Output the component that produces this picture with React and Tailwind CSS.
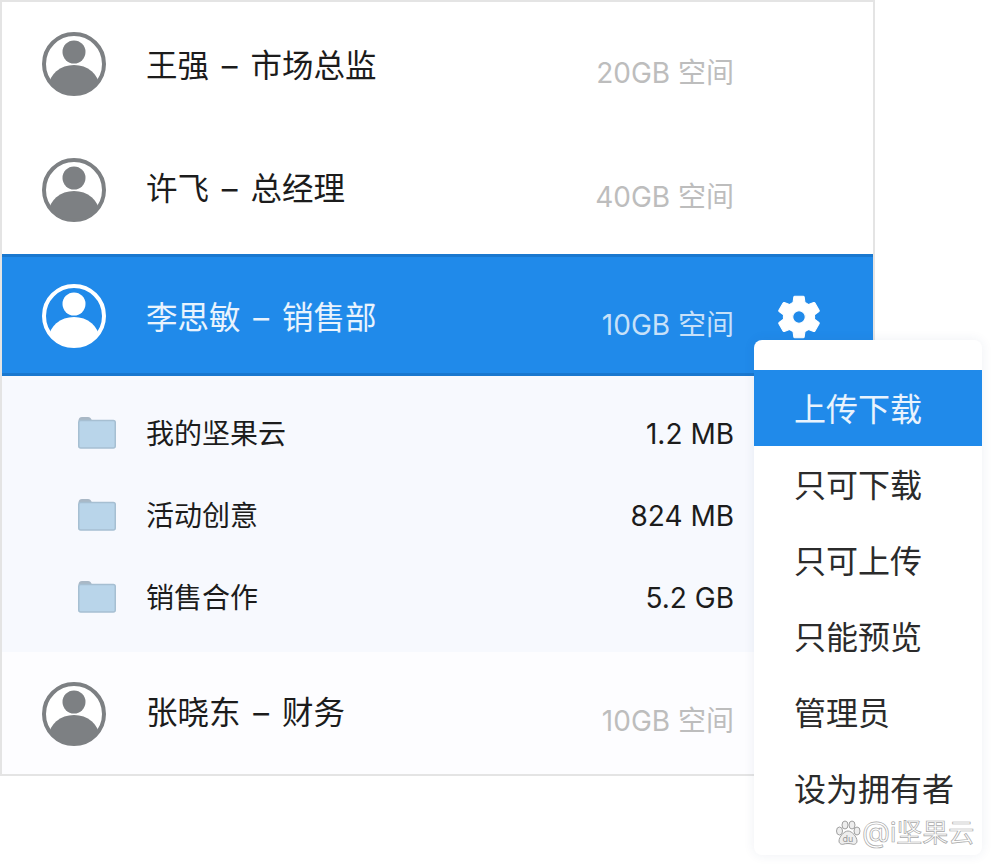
import React from 'react';

const FONT = 'font-["Inter","Noto_Sans_CJK_SC",sans-serif]';

const Avatar = ({ active }) => (
    <svg width="64" height="64" viewBox="0 0 64 64" className="shrink-0">
        <defs>
            <clipPath id={active ? 'clipA' : 'clipB'}>
                <circle cx="32" cy="32" r="29" />
            </clipPath>
        </defs>
        <circle cx="32" cy="32" r="30" fill={active ? '#208aea' : '#fff'} stroke={active ? '#fff' : '#7d8083'} strokeWidth="4" />
        <circle cx="32" cy="20" r="11.5" fill={active ? '#fff' : '#7d8083'} />
        <ellipse cx="32" cy="54" rx="25" ry="21" fill={active ? '#fff' : '#7d8083'} clipPath={`url(#${active ? 'clipA' : 'clipB'})`} />
    </svg>
);

const Folder = () => (
    <svg width="38" height="33" viewBox="0 0 38 33" className="shrink-0 mb-[3px]">
        <path d="M0.5 5 Q0.5 1 4 1 H10 Q13 1 14 5 Z" fill="#a9b8c6" />
        <rect x="0.75" y="4.5" width="36.5" height="27.5" rx="2" fill="#b9d5ea" stroke="#a6bfd2" strokeWidth="1.5" />
    </svg>
);

const Gear = () => (
    <svg width="50" height="50" viewBox="0 0 24 24" fill="#fff" stroke="#fff" strokeWidth="0.5" strokeLinejoin="round">
        <path fillRule="evenodd" d="M19.43 12.98c.04-.32.07-.64.07-.98s-.03-.66-.07-.98l2.11-1.65a.5.5 0 0 0 .12-.64l-2-3.46a.5.5 0 0 0-.61-.22l-2.49 1a7.3 7.3 0 0 0-1.69-.98l-.38-2.65A.49.49 0 0 0 14 2h-4a.49.49 0 0 0-.49.42l-.38 2.65c-.61.25-1.17.59-1.69.98l-2.49-1a.49.49 0 0 0-.61.22l-2 3.46a.49.49 0 0 0 .12.64l2.11 1.65c-.04.32-.07.65-.07.98s.03.66.07.98l-2.11 1.65a.5.5 0 0 0-.12.64l2 3.46c.12.22.39.3.61.22l2.49-1c.52.4 1.08.73 1.69.98l.38 2.65c.03.24.24.42.49.42h4c.25 0 .46-.18.49-.42l.38-2.65c.61-.25 1.17-.59 1.69-.98l2.49 1c.23.09.49 0 .61-.22l2-3.46a.5.5 0 0 0-.12-.64l-2.11-1.65ZM12 15a3 3 0 1 1 0-6 3 3 0 0 1 0 6Z" />
    </svg>
);

const Row = ({ name, quota, active, className, nameClass, quotaClass }) => (
    <div className={`flex items-center pl-[40px] pr-[139px] ${active ? 'bg-[#208aea] border-y-[3px] border-[#1a78cf]' : ''} ${className}`}>
        <Avatar active={active} />
        <span className={`ml-[40px] text-[31.5px] font-normal [word-spacing:4px] ${active ? 'text-white/90' : 'text-[#1c1c1c]'} ${nameClass}`}>{name}</span>
        <span className={`ml-auto text-[28px] ${active ? 'text-white/75' : 'text-[#bdbdbd]'} ${quotaClass}`}>{quota}</span>
    </div>
);

const folders = [
    { name: '我的坚果云', size: '1.2 MB' },
    { name: '活动创意', size: '824 MB' },
    { name: '销售合作', size: '5.2 GB' },
];

const menu = ['上传下载', '只可下载', '只可上传', '只能预览', '管理员', '设为拥有者'];

export default function App() {
    return (
        <div className={`relative w-[994px] h-[868px] bg-white overflow-hidden ${FONT}`}>
            <div className="w-[875px] h-[776px] border-2 border-[#e4e4e4] flex flex-col">
                <Row name="王强 – 市场总监" quota="20GB 空间" className="h-[126px] pb-[3px]" nameClass="mt-[4px]" quotaClass="mt-[18px]" />
                <Row name="许飞 – 总经理" quota="40GB 空间" className="h-[126px] pb-[3px]" nameClass="mb-[2px]" quotaClass="mt-[14px]" />
                <div className="relative">
                    <Row name="李思敏 – 销售部" quota="10GB 空间" active className="h-[122px] pt-[1px]" nameClass="mt-[4px]" quotaClass="mt-[18px]" />
                    <div className="absolute left-[772px] top-[38px]"><Gear /></div>
                </div>
                <div className="h-[276px] bg-[#f7f9fe] pt-[17px] pl-[76px] pr-[139px] flex flex-col">
                    {folders.map(f => (
                        <div key={f.name} className="h-[82px] flex items-center">
                            <Folder />
                            <span className="ml-[30px] text-[28px] text-[#1c1c1c]">{f.name}</span>
                            <span className="ml-auto text-[28px] text-[#1c1c1c]">{f.size}</span>
                        </div>
                    ))}
                </div>
                <Row name="张晓东 – 财务" quota="10GB 空间" className="flex-1 bg-[#fdfdff] pt-[2px]" nameClass="mb-[2px]" quotaClass="mt-[14px]" />
            </div>

            {/* permission menu */}
            <div className="absolute left-[754px] top-[340px] w-[228px] h-[515px] bg-white rounded-lg shadow-[0_0_12px_rgba(40,60,110,0.08)] pt-[30px]">
                {menu.map((m, i) => (
                    <div key={m} className={`h-[76px] flex items-center pl-[40px] pt-[3px] text-[32px] whitespace-nowrap ${i === 0 ? 'bg-[#208aea] text-white/90' : 'text-[#2b2b2b]'}`}>
                        {m}
                    </div>
                ))}
            </div>

            {/* watermark */}
            <div className="absolute left-[835px] top-[817px] flex items-center text-[26px] leading-[30px] text-white/90 [-webkit-text-stroke:0.7px_#a8a8a8]">
                <svg width="26" height="26" viewBox="0 0 26 26" fill="#eeeeee" stroke="#a0a0a0" strokeWidth="1">
                    <ellipse cx="4.5" cy="11" rx="3" ry="4" />
                    <ellipse cx="10" cy="5" rx="3" ry="4" />
                    <ellipse cx="17" cy="5" rx="3" ry="4" />
                    <ellipse cx="22" cy="11" rx="3" ry="4" />
                    <path d="M13 11c4 0 9 6 9 10 0 3-3 4-5 3-2-.6-6-.6-8 0-2 1-5 0-5-3 0-4 5-10 9-10Z" />
                    <text x="13" y="22" textAnchor="middle" fontSize="9" stroke="none" fill="#999">du</text>
                </svg>
                <span className="ml-[1px]"><span className="text-[29px]">@</span>i坚果云</span>
            </div>
        </div>
    );
}
